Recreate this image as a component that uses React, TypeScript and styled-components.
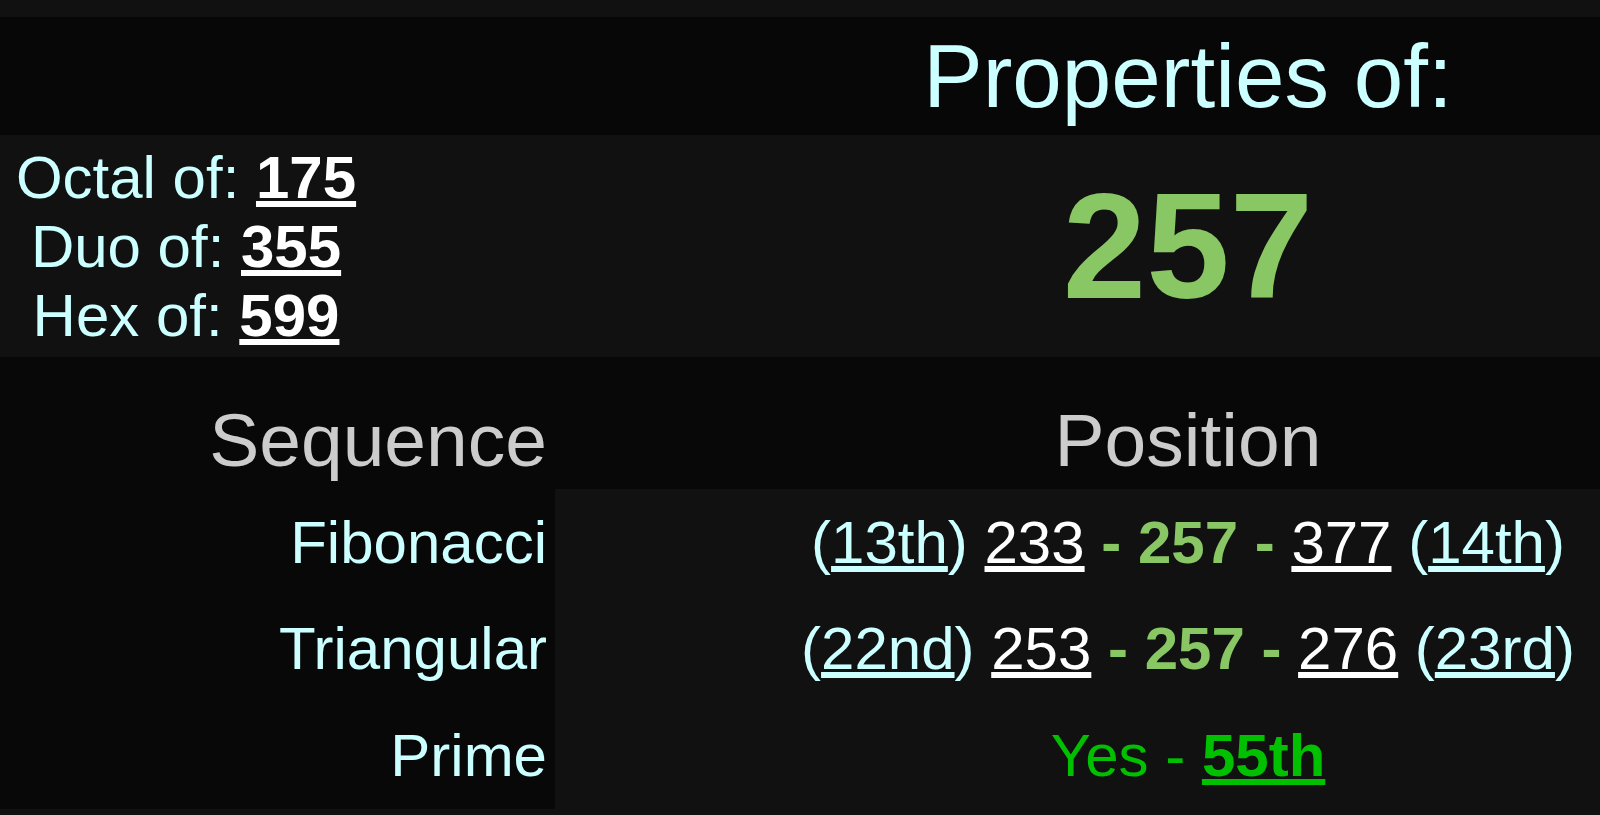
import React from "react";
import styled, { createGlobalStyle } from "styled-components";

const GlobalStyle = createGlobalStyle`
  html, body {
    margin: 0;
    padding: 0;
    background: #111111;
  }
  body {
    font-family: "Liberation Sans", Arial, sans-serif;
  }
`;

const CYAN = "#ccffff";
const SOFT_GREEN = "#89c664";
const BRIGHT_GREEN = "#00c000";

const Page = styled.div`
  width: 1600px;
  height: 815px;
  padding-top: 17px;
  box-sizing: border-box;
  overflow: hidden;
  background: #111111;
`;

const Sheet = styled.div`
  width: 1821px;
  display: flex;
  flex-direction: column;
`;

const TwoColumns = styled.div`
  display: grid;
  grid-template-columns: 555px 1266px;
`;

const TitleBar = styled(TwoColumns)`
  height: 118px;
  background: #070707;
  align-items: center;
`;

const TitleText = styled.h1`
  grid-column: 2;
  margin: 0;
  text-align: center;
  font-size: 89px;
  font-weight: 400;
  line-height: 1.15;
  color: ${CYAN};
`;

const Summary = styled(TwoColumns)`
  height: 222px;
  align-items: center;
`;

const BaseList = styled.div`
  width: 372px;
  display: flex;
  flex-direction: column;
  align-items: center;
  font-size: 60px;
  line-height: 69px;
  color: ${CYAN};
`;

const BaseLine = styled.div`
  white-space: nowrap;
`;

const BigNumber = styled.div`
  text-align: center;
  font-size: 150px;
  font-weight: 700;
  line-height: 1.15;
  color: ${SOFT_GREEN};
`;

const SequenceTable = styled(TwoColumns)`
  grid-template-rows: 132px repeat(3, 106.67px);
`;

const HeaderCell = styled.div<{ $align: "right" | "center" }>`
  background: #080808;
  display: flex;
  align-items: flex-end;
  justify-content: ${(p) => (p.$align === "right" ? "flex-end" : "center")};
  padding: 0 ${(p) => (p.$align === "right" ? "8px" : "0")} 6px 0;
  font-size: 75px;
  line-height: 1.15;
  color: #cccccc;
`;

const LabelCell = styled.div`
  background: #080808;
  display: flex;
  align-items: center;
  justify-content: flex-end;
  padding-right: 8px;
  font-size: 60px;
  line-height: 1.15;
  color: ${CYAN};
`;

const ValueCell = styled.div`
  display: flex;
  align-items: center;
  justify-content: center;
  font-size: 60px;
  line-height: 1.15;
  color: ${CYAN};
  white-space: pre;
`;

const Link = styled.span<{ $tone: "white" | "cyan" | "green" }>`
  text-decoration: underline;
  color: ${(p) =>
    p.$tone === "white" ? "#ffffff" : p.$tone === "green" ? BRIGHT_GREEN : CYAN};
`;

const BoldLink = styled(Link)`
  font-weight: 700;
`;

const Accent = styled.span`
  font-weight: 700;
  color: ${SOFT_GREEN};
`;

const PrimeText = styled.span`
  color: ${BRIGHT_GREEN};
`;

type Neighbour = {
  beforeRank: string;
  before: string;
  after: string;
  afterRank: string;
};

const sequences: { label: string; data: Neighbour }[] = [
  {
    label: "Fibonacci",
    data: { beforeRank: "13th", before: "233", after: "377", afterRank: "14th" },
  },
  {
    label: "Triangular",
    data: { beforeRank: "22nd", before: "253", after: "276", afterRank: "23rd" },
  },
];

const bases = [
  { label: "Octal of: ", value: "175" },
  { label: "Duo of: ", value: "355" },
  { label: "Hex of: ", value: "599" },
];

function NeighbourLine({ d }: { d: Neighbour }) {
  return (
    <>
      (<Link $tone="cyan">{d.beforeRank}</Link>){" "}
      <Link $tone="white">{d.before}</Link>
      <Accent>{" - "}</Accent>
      <Accent>257</Accent>
      <Accent>{" - "}</Accent>
      <Link $tone="white">{d.after}</Link> (
      <Link $tone="cyan">{d.afterRank}</Link>)
    </>
  );
}

export default function App() {
  return (
    <>
      <GlobalStyle />
      <Page>
        <Sheet>
          <TitleBar>
            <TitleText>Properties of:</TitleText>
          </TitleBar>
          <Summary>
            <BaseList>
              {bases.map((b) => (
                <BaseLine key={b.label}>
                  {b.label}
                  <BoldLink $tone="white">{b.value}</BoldLink>
                </BaseLine>
              ))}
            </BaseList>
            <BigNumber>257</BigNumber>
          </Summary>
          <SequenceTable>
            <HeaderCell $align="right">Sequence</HeaderCell>
            <HeaderCell $align="center">Position</HeaderCell>
            {sequences.map((s) => (
              <React.Fragment key={s.label}>
                <LabelCell>{s.label}</LabelCell>
                <ValueCell>
                  <NeighbourLine d={s.data} />
                </ValueCell>
              </React.Fragment>
            ))}
            <LabelCell>Prime</LabelCell>
            <ValueCell>
              <PrimeText>{"Yes - "}</PrimeText>
              <BoldLink $tone="green">55th</BoldLink>
            </ValueCell>
          </SequenceTable>
        </Sheet>
      </Page>
    </>
  );
}
